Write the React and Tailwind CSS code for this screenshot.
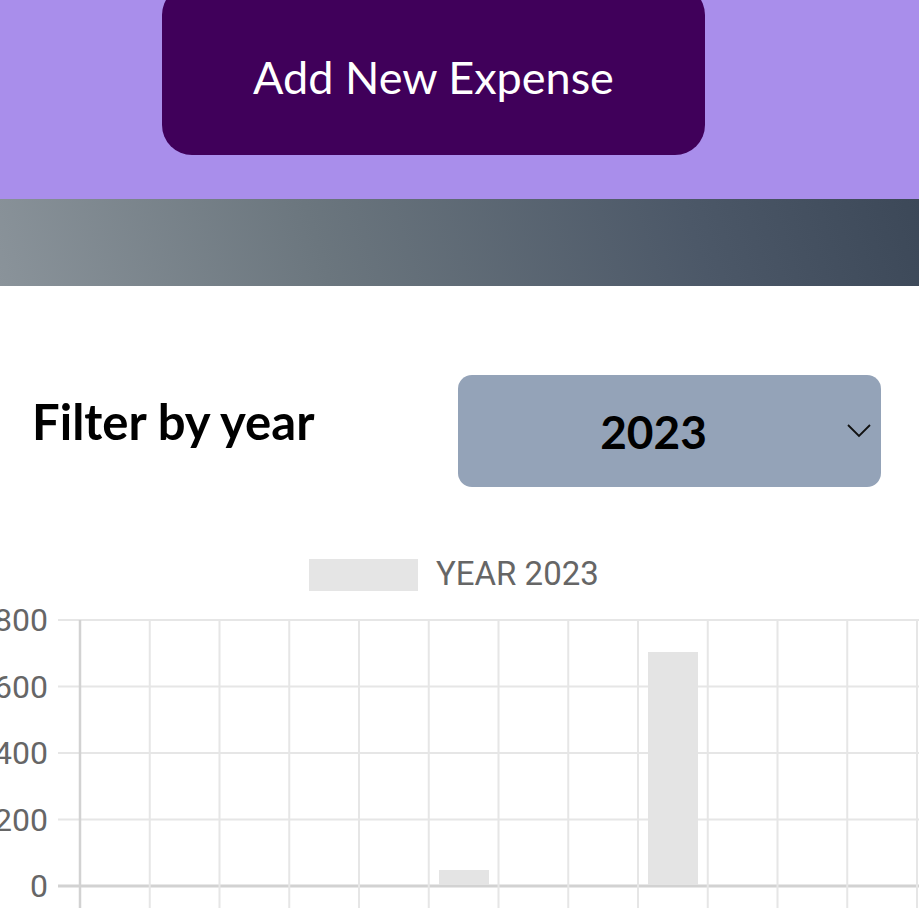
export default function App() {
  const vLines = Array.from({ length: 13 }, (_, i) => 80 + i * 69.75);
  const hLines = [80, 146.5, 213, 279.5, 346];
  const labels = ["800", "600", "400", "200", "0"];
  return (
    <div className="w-[919px] h-[917px] overflow-hidden bg-white">
      <div className="h-[199px] bg-[#a98eeb] flex items-start">
        <button
          className="ml-[162px] -mt-[15px] w-[543px] h-[170px] rounded-[30px] bg-[#40005a] text-white text-[45px] pt-[15px] flex items-center justify-center"
          style={{ fontFamily: "Lato, 'Noto Sans', sans-serif" }}
        >
          Add New Expense
        </button>
      </div>
      <div className="h-[87px] bg-[linear-gradient(72deg,#8a939a_0%,#6b767e_35%,#4c5868_75%,#3c4858_100%)]" />
      <div className="mt-[89px] flex items-center h-[112px]" style={{ fontFamily: "Lato, 'Noto Sans', sans-serif" }}>
        <div className="ml-[32px] w-[426px] text-[49px] font-bold text-black -mt-[18px]">Filter by year</div>
        <div className="relative w-[423px] h-[112px] rounded-[14px] bg-[#94a3b8] flex items-center justify-center">
          <span className="text-[46px] font-bold text-black -ml-[32px]">2023</span>
          <svg className="absolute right-[9px] top-[48px]" width="26" height="16" viewBox="0 0 26 16">
            <path d="M2 2 L13 13 L24 2" fill="none" stroke="#111" strokeWidth="1.8" />
          </svg>
        </div>
      </div>
      <svg className="mt-[53px] block" width="919" height="377" viewBox="0 0 919 377" style={{ fontFamily: "Roboto, sans-serif" }}>
        <rect x="309" y="19" width="109" height="32" fill="#e5e5e5" />
        <text x="436" y="45" fontSize="33" fill="#666">YEAR 2023</text>
        {hLines.map((y, i) => (
          <line key={"h" + i} x1="58" x2="919" y1={y} y2={y} stroke={i === 4 ? "#d2d2d2" : "#e6e6e6"} strokeWidth={i === 4 ? 3 : 2} />
        ))}
        {vLines.map((x, i) => (
          <line key={"v" + i} x1={x} x2={x} y1="80" y2="368" stroke={i === 0 ? "#d2d2d2" : "#e6e6e6"} strokeWidth={i === 0 ? 2.5 : 2} />
        ))}
        {hLines.map((y, i) => (
          <text key={"t" + i} x="48" y={y + 11} fontSize="32" fill="#666" textAnchor="end">{labels[i]}</text>
        ))}
        <rect x="439" y="330" width="50" height="15" fill="#e4e4e4" />
        <rect x="648" y="112" width="50" height="233" fill="#e4e4e4" />
      </svg>
    </div>
  );
}
